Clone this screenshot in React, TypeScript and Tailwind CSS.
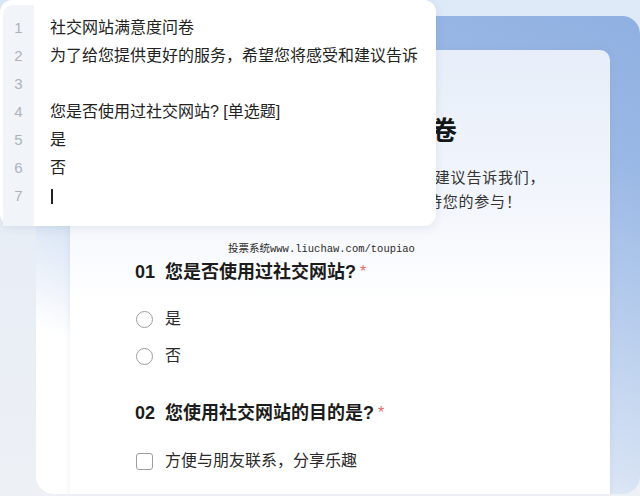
const sans = "font-['Liberation_Sans','Noto_Sans_CJK_SC',sans-serif]";

const editorLines = [
  "社交网站满意度问卷",
  "为了给您提供更好的服务，希望您将感受和建议告诉",
  "",
  "您是否使用过社交网站? [单选题]",
  "是",
  "否",
  "",
];

function Editor() {
  return (
    <div className="absolute left-0 top-0 z-20 h-[226px] w-[436px] rounded-[12px] bg-white pl-[3px] pt-[5px] shadow-[0_2px_10px_rgba(60,80,120,0.10)]">
      <div className="flex h-full">
        <div className="w-[31px] rounded-tl-[10px] bg-[#f1f4f9] pt-[9px]">
          {editorLines.map((_, i) => (
            <div key={i} className="h-[28px] text-center text-[15px] leading-[28px] text-[#adb3bd]">
              {i + 1}
            </div>
          ))}
        </div>
        <div className="flex-1 pl-[16px] pt-[9px] text-[16px] text-[#222]">
          {editorLines.map((line, i) => (
            <div key={i} className="flex h-[28px] items-center whitespace-nowrap leading-[28px]">
              {i === 6 ? <span className="ml-[1px] h-[15px] w-[1.5px] bg-[#222]" /> : line}
            </div>
          ))}
        </div>
      </div>
    </div>
  );
}

function Question({ no, title }: { no: string; title: string }) {
  return (
    <div className="flex h-[26px] items-center whitespace-nowrap text-[18px] leading-[26px] text-[#1c1c1c]">
      <span className="w-[30px] font-semibold">{no}</span>
      <span className="font-semibold">{title}</span>
      <span className="ml-[4px] text-[16px] text-[#e26a6a]">*</span>
    </div>
  );
}

function Option({ label, box }: { label: string; box?: boolean }) {
  return (
    <div className="flex h-[24px] items-center gap-[12px] text-[16px] leading-[24px] text-[#2a2a2a]">
      <span
        className={
          box
            ? "ml-[1px] h-[17px] w-[17px] rounded-[3px] border border-[#9d9d9d] bg-white"
            : "ml-[1px] h-[17px] w-[17px] rounded-full border border-[#9d9d9d] bg-white"
        }
      />
      <span>{label}</span>
    </div>
  );
}

export default function App() {
  return (
    <div className={`relative h-[496px] w-[640px] overflow-hidden bg-[linear-gradient(180deg,#dde9f7_0%,#e7edf6_35%,#edf0f5_100%)] ${sans}`}>
      <Editor />

      {/* outer card with blue header gradient */}
      <div className="ml-[36px] mt-[16px] h-[478px] w-[604px] overflow-hidden rounded-[18px] bg-[linear-gradient(205deg,#8fb0e2_0%,#9ab8e5_20%,#b0c8eb_36%,#d7e3f4_62%,#ffffff_78%)] pl-[34px] pt-[34px]">
        <div className="relative h-[460px] w-[540px] rounded-[10px] bg-[linear-gradient(180deg,#e7eef9_0%,#f3f6fc_35%,#ffffff_55%)] shadow-[0_0_6px_rgba(120,140,170,0.12)]">
          <div className="pt-[64px] text-center">
            <h1 className="text-[26px] font-bold leading-[34px] text-[#161616]">社交网站满意度问卷</h1>
            <p className="mt-[18px] text-[15px] leading-[24px] tracking-[0.8px] text-[#333]">
              为了给您提供更好的服务，希望您将感受和建议告诉我们，
              <br />
              我们非常重视每位用户的宝贵意见，期待您的参与！
            </p>
          </div>

          <div className="absolute left-[158px] top-[193px] whitespace-nowrap font-['Liberation_Mono','Noto_Sans_CJK_SC',monospace] text-[10.5px] leading-[12px] text-[#2a2a2a]">
            投票系统www.liuchaw.com/toupiao
          </div>

          <div className="pl-[65px] pt-[45px]">
            <Question no="01" title="您是否使用过社交网站?" />
            <div className="mt-[22px] flex flex-col gap-[13px]">
              <Option label="是" />
              <Option label="否" />
            </div>
            <div className="mt-[32px]">
              <Question no="02" title="您使用社交网站的目的是?" />
            </div>
            <div className="mt-[23px]">
              <Option label="方便与朋友联系，分享乐趣" box />
            </div>
          </div>
        </div>
      </div>
    </div>
  );
}
